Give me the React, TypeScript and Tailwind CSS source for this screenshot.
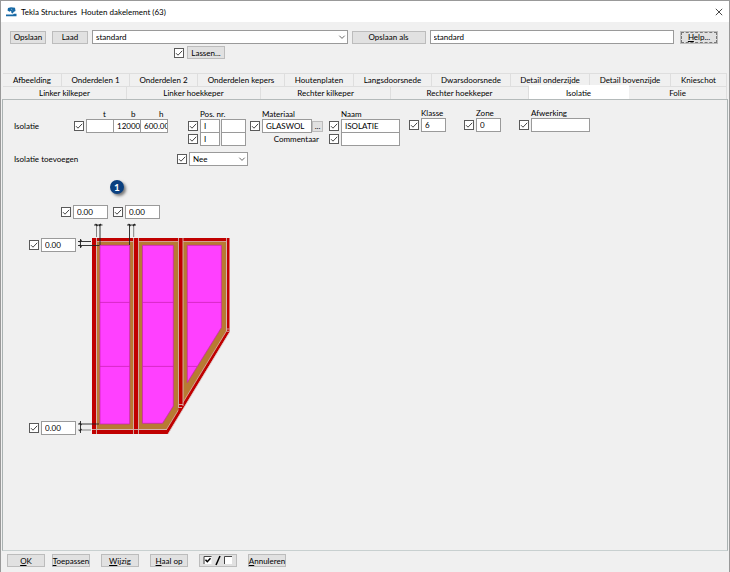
import { useState, type ReactNode } from 'react'
import { clsx } from 'clsx'

const upperTabs = [
    'Afbeelding', 'Onderdelen 1', 'Onderdelen 2', 'Onderdelen kepers', 'Houtenplaten',
    'Langsdoorsnede', 'Dwarsdoorsnede', 'Detail onderzijde', 'Detail bovenzijde', 'Knieschot',
]
const lowerTabs = ['Linker kilkeper', 'Linker hoekkeper', 'Rechter kilkeper', 'Rechter hoekkeper', 'Isolatie', 'Folie']

function Check({ label }: { label: string }) {
    return (
        <span className="grid size-[10px] shrink-0">
            <input type="checkbox" defaultChecked aria-label={label} className="peer [grid-area:1/1] size-[10px] appearance-none border border-[#5a5a5a] bg-white" />
            <svg viewBox="0 0 10 10" className="pointer-events-none invisible [grid-area:1/1] size-[10px] peer-checked:visible">
                <path d="M2 5.2 4 7.2 8.2 2.8" fill="none" stroke="#444" strokeWidth="1" />
            </svg>
        </span>
    )
}

function Field({ label, value = '', className }: { label: string; value?: string; className?: string }) {
    return (
        <input type="text" aria-label={label} defaultValue={value} className={clsx('h-[14px] min-w-0 rounded-none border border-[#9a9a9a] bg-white pl-[3px] leading-3 outline-none', className)} />
    )
}

function Dropdown({ label, value, className }: { label: string; value: string; className?: string }) {
    return (
        <span className={clsx('grid h-[14px] min-w-0', className)}>
            <select aria-label={label} defaultValue={value} className="[grid-area:1/1] w-full appearance-none rounded-none border border-[#9a9a9a] bg-white px-[3px] leading-3 outline-none">
                <option>{value}</option>
            </select>
            <svg viewBox="0 0 8 8" className="pointer-events-none [grid-area:1/1] mr-[2px] size-2 self-center justify-self-end">
                <path d="M1.3 2.7 4 5.4 6.7 2.7" fill="none" stroke="#555" strokeWidth="0.9" />
            </svg>
        </span>
    )
}

function Button({ children, label, className }: { children: ReactNode; label?: string; className?: string }) {
    return (
        <button type="button" aria-label={label} className={clsx('flex shrink-0 items-center justify-center border border-[#bcbcbc] bg-[#e1e1e1] leading-3 whitespace-nowrap', className)}>
            <span>{children}</span>
        </button>
    )
}

function TabRow({ tabs, active, onSelect, className }: { tabs: string[]; active: string; onSelect: (tab: string) => void; className: string }) {
    return (
        <div role="tablist" className={clsx('grid', className)}>
            {tabs.map((tab) => (
                <button
                    key={tab}
                    type="button"
                    role="tab"
                    aria-selected={tab === active}
                    onClick={() => onSelect(tab)}
                    className={clsx('border-t border-r leading-3 whitespace-nowrap', tab === active ? '-mt-px h-[15px] border-white bg-white' : 'h-[13px] border-[#dedede]')}
                >
                    {tab}
                </button>
            ))}
        </div>
    )
}

function Group({ title, className, children }: { title?: string; className?: string; children: ReactNode }) {
    return (
        <div className={clsx('flex flex-col', className)}>
            <div className="h-[11px] pl-3 leading-3 whitespace-nowrap">{title}</div>
            {children}
        </div>
    )
}

function TitleBar() {
    return (
        <header className="flex h-[21px] items-center bg-white pr-[6px] pl-[5px]">
            <svg viewBox="0 0 11 10" className="mr-1 h-[10px] w-[11px]">
                <path d="M2 1 5 .3 9 .7 9.5 4 7.5 5 7 6.5 5.5 6 5 3.8 3.5 4.8 1.5 3.5Z" fill="#1769a5" />
                <path d="M0 7.5H7L8 6.8H10.5V9.3H0Z" fill="#1769a5" />
                <path d="M5.2 2 6.3 3" stroke="#fff" strokeWidth="0.6" />
            </svg>
            <h1 className="whitespace-pre">Tekla Structures  Houten dakelement (63)</h1>
            <button type="button" aria-label="Sluiten" className="ml-auto">
                <svg viewBox="0 0 8 8" className="size-2">
                    <path d="M.8 .8 7.2 7.2M7.2 .8 .8 7.2" stroke="#333" strokeWidth="0.9" />
                </svg>
            </button>
        </header>
    )
}

function RoofDrawing() {
    return (
        <svg viewBox="76 219 156 217" className="h-[217px] w-[156px] shrink-0">
            <path d="M92 238H229.5V332L168 434H92Z" fill="#c00000" />
            <path d="M96.5 241.5H226.5V331L166.5 429.5H96.5Z" fill="#b87a33" stroke="#d5a9a0" strokeWidth="0.9" />
            <path d="M133.5 238H138.5V434H133.5ZM178.5 238H183V406L178.5 411Z" fill="#c00000" />
            <g fill="none" stroke="#d5b5b0" strokeWidth="0.9">
                <path d="M96.5 238V434M133.5 238V434M138.5 238V434M178.5 238V408M183 238V406" />
                <path d="M226.5 238V331M226.5 329H229.5M226.5 331.3H229.5M178.5 404.5H183M178.5 407.5H182M92 429.5H167" />
                <path d="M229.5 332.5 168 434" stroke="#dccaca" />
            </g>
            <g fill="#ff40ff" stroke="#c71fae" strokeWidth="0.7">
                <path d="M100 245.3H129.7V424H100Z" />
                <path d="M142.5 245.3H173.3V406L162.5 423.3H142.5Z" />
                <path d="M187.3 245.3H221.3V327.7L187.3 382.5Z" />
                <path d="M100 302.4H129.7M142.5 302.4H173.3M187.3 302.4H221.3M100 366.4H129.7M142.5 366.4H173.3M187.3 366.4H197" />
            </g>
            <g stroke="#222" strokeWidth="0.9">
                <path d="M100 224V245M129.5 224V245M78 245.5H99.5M78 241.5H91M78 424H99" />
                <path d="M96.5 224V237M133.7 224V237M78 430H91" stroke="#777" />
                <path d="M94 225H102.5M127 225H136M80.5 239V248M80.5 421V433" />
            </g>
            <g fill="none" stroke="#222" strokeWidth="1.2">
                <path d="M95.5 224 97.5 226M99 226 101 224M128.5 224 130.5 226M133 226 135 224" />
                <path d="M79.5 242 81.5 240M79.5 245 81.5 247M79.5 423 81.5 425M79.5 431 81.5 429" />
            </g>
        </svg>
    )
}

function Offset({ label }: { label: string }) {
    return (
        <div className="flex items-center gap-[2px]">
            <Check label={label} />
            <Field label={label} value="0.00" className="w-[35px]" />
        </div>
    )
}

function InsulationPanel() {
    return (
        <main className="flex-1 border border-t-[#b4baba] border-r-[#aab2b2] border-b-[#c8d0d0] border-l-[#aab2b2] pt-2 pb-10 pl-[11px]">
            <div className="flex items-start">
                <div className="w-[60px] pt-[11px] leading-[14px]">Isolatie</div>
                <div className="mr-5">
                    <div className="flex h-[11px] pl-3 leading-3">
                        <span className="w-7 pl-[17px]">t</span>
                        <span className="w-7 pl-[17px]">b</span>
                        <span className="w-[26px] pl-[17px]">h</span>
                    </div>
                    <div className="flex items-center">
                        <Check label="Afmetingen" />
                        <Field label="t" className="ml-[2px] w-7" />
                        <Field label="b" value="12000.00" className="-ml-px w-7" />
                        <Field label="h" value="600.00" className="-ml-px w-7" />
                    </div>
                </div>
                <Group title="Pos. nr." className="mr-1">
                    {['Positie onderdeel', 'Positie samenstelling'].map((name) => (
                        <div key={name} className="-mb-px flex items-center">
                            <Check label={name} />
                            <Field label={`${name} prefix`} value="I" className="ml-[2px] w-5" />
                            <Field label={`${name} nummer`} className="ml-px w-[25px]" />
                        </div>
                    ))}
                </Group>
                <Group title="Materiaal" className="mr-[6px]">
                    <div className="flex items-center">
                        <Check label="Materiaal gebruiken" />
                        <Field label="Materiaal" value="GLASWOL" className="ml-[2px] w-[50px]" />
                        <Button label="Materiaal kiezen" className="h-[11px] w-[11px]">...</Button>
                    </div>
                    <div className="pr-1 text-right">Commentaar</div>
                </Group>
                <Group title="Naam" className="mr-[9px]">
                    {[['Naam', 'ISOLATIE'], ['Commentaar', '']].map(([name, value]) => (
                        <div key={name} className="-mb-px flex items-center gap-[2px]">
                            <Check label={`${name} gebruiken`} />
                            <Field label={name} value={value} className="w-[59px]" />
                        </div>
                    ))}
                </Group>
                <div className="-mt-px flex gap-[18px]">
                    {[['Klasse', '6'], ['Zone', '0']].map(([name, value]) => (
                        <Group key={name} title={name}>
                            <div className="flex items-center gap-[2px]">
                                <Check label={`${name} gebruiken`} />
                                <Field label={name} value={value} className="w-[25px]" />
                            </div>
                        </Group>
                    ))}
                    <Group title="Afwerking">
                        <div className="flex items-center gap-[2px]">
                            <Check label="Afwerking gebruiken" />
                            <Field label="Afwerking" className="w-[59px]" />
                        </div>
                    </Group>
                </div>
            </div>

            <div className="mt-[7px] flex items-center">
                <div className="w-[163px]">Isolatie toevoegen</div>
                <Check label="Isolatie toevoegen gebruiken" />
                <Dropdown label="Isolatie toevoegen" value="Nee" className="ml-[2px] w-[59px]" />
            </div>

            <div className="mt-[14px] pl-[96px]">
                <div className="flex size-[14px] items-center justify-center rounded-full bg-[#0b4080] text-[10px] font-bold text-white shadow-[2px_2px_3px_rgba(0,0,0,0.5)]">1</div>
            </div>
            <div className="mt-[11px] flex gap-[5px] pl-[47px]">
                <Offset label="Afstand links" />
                <Offset label="Afstand rechts" />
            </div>
            <div className="flex pl-[15px]">
                <div className="flex flex-col justify-between pt-[19px] pb-px">
                    <Offset label="Afstand boven" />
                    <Offset label="Afstand onder" />
                </div>
                <RoofDrawing />
            </div>
        </main>
    )
}

export default function App() {
    const [active, setActive] = useState('Isolatie')

    return (
        <div className="flex min-h-screen flex-col border-t border-r border-l border-[#999] bg-[#f0f0f0] font-['Lato','Open_Sans',sans-serif] text-[8px] leading-3 text-black">
            <TitleBar />

            <div className="flex items-center pt-2 pr-[11px] pl-[9px]">
                <Button className="h-[13px] w-9">Opslaan</Button>
                <Button className="ml-[6px] h-[13px] w-9">Laad</Button>
                <Dropdown label="Instellingen" value="standard" className="ml-1 flex-[255]" />
                <Button className="mx-1 h-[13px] w-[74px]">Opslaan als</Button>
                <Field label="Naam instellingen" value="standard" className="flex-[239]" />
                <Button className="ml-[6px] h-[13px] w-[38px] outline-1 -outline-offset-2 outline-[#777] outline-dashed"><u>H</u>elp...</Button>
            </div>
            <div className="mt-[2px] flex items-center gap-[3px] pl-[173px]">
                <Check label="Lassen gebruiken" />
                <Button className="h-[13px] w-[38px]">Lassen...</Button>
            </div>

            <nav className="mx-[2px] mt-[14px]">
                <TabRow tabs={upperTabs} active={active} onSelect={setActive} className="grid-cols-[59fr_68fr_68fr_87fr_69fr_78fr_79fr_79fr_81fr_56fr]" />
                <TabRow tabs={lowerTabs} active={active} onSelect={setActive} className="h-[13px] grid-cols-[124fr_134fr_130fr_138fr_100fr_98fr]" />
            </nav>
            <div className="mx-px flex flex-1 flex-col">
                <InsulationPanel />
            </div>

            <footer className="flex h-[21px] items-start gap-[11px] pt-[3px] pl-[6px]">
                <div className="flex gap-[7px]">
                    <Button className="h-[13px] w-[38px]"><u>O</u>K</Button>
                    <Button className="h-[13px] w-[38px]"><u>T</u>oepassen</Button>
                </div>
                <Button className="h-[13px] w-[38px]"><u>W</u>ijzig</Button>
                <Button className="h-[13px] w-[38px]"><u>H</u>aal op</Button>
                <Button label="Alles aan of uit" className="h-[13px] w-[38px]">
                    <svg viewBox="0 0 30 11" className="h-[11px] w-[30px]">
                        <path d="M1.5 2H8.5V9H1.5ZM22 2H29V9H22Z" fill="#fff" />
                        <path d="M1 9V1.5H8.5M21.5 9V1.5H29" fill="none" stroke="#444" strokeWidth="1" />
                        <path d="M2.5 4.8 4.3 6.7 7.5 3.2" fill="none" stroke="#000" strokeWidth="1.5" />
                        <path d="M13 10 17 1" stroke="#000" strokeWidth="1.5" />
                    </svg>
                </Button>
                <Button className="h-[13px] w-[38px]"><u>A</u>nnuleren</Button>
            </footer>
        </div>
    )
}
